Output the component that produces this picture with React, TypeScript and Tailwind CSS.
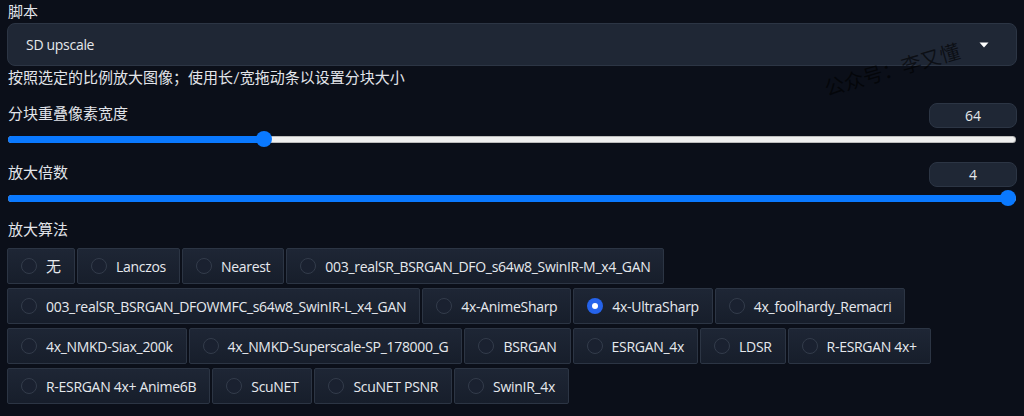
import React from "react";

const options = [
  "无",
  "Lanczos",
  "Nearest",
  "003_realSR_BSRGAN_DFO_s64w8_SwinIR-M_x4_GAN",
  "003_realSR_BSRGAN_DFOWMFC_s64w8_SwinIR-L_x4_GAN",
  "4x-AnimeSharp",
  "4x-UltraSharp",
  "4x_foolhardy_Remacri",
  "4x_NMKD-Siax_200k",
  "4x_NMKD-Superscale-SP_178000_G",
  "BSRGAN",
  "ESRGAN_4x",
  "LDSR",
  "R-ESRGAN 4x+",
  "R-ESRGAN 4x+ Anime6B",
  "ScuNET",
  "ScuNET PSNR",
  "SwinIR_4x",
];

const FONT = "font-['Lato','Noto_Sans_CJK_SC',sans-serif]";
const LATIN = "font-['Open_Sans',sans-serif] [font-stretch:92%] font-medium";

function Slider({ value, min, max, label }: { value: number; min: number; max: number; label: string }) {
  const frac = (value - min) / (max - min);
  return (
    <div className="flex flex-col">
      <div className="flex items-start justify-between">
        <span className="text-[15px] leading-[22px] text-[#e2e5ea] pl-[1px]">{label}</span>
        <div className={`mt-[1px] h-[25px] w-[88px] rounded-lg border border-[#2c3544] bg-[#1f2735] flex items-center justify-center text-[14px] text-[#e5e7eb] ${LATIN}`}>
          {value}
        </div>
      </div>
      <div className="relative mt-[3px] h-4 mx-[1px]">
        <div className="absolute left-0 right-0 top-[4.5px] h-[7px] rounded-full bg-[#efefef] border border-[#9a9a9a]/60" />
        <div
          className="absolute left-0 top-[4.5px] h-[7px] rounded-full bg-[#0a79ff]"
          style={{ width: `calc(${frac} * (100% - 16px) + 8px)` }}
        />
        <div
          className="absolute top-0 h-4 w-4 rounded-full bg-[#0a79ff]"
          style={{ left: `calc(${frac} * (100% - 16px))` }}
        />
      </div>
    </div>
  );
}

export default function App() {
  return (
    <div className={`relative w-[1024px] h-[416px] overflow-hidden bg-[#0b0f19] px-[7px] ${FONT}`}>
      <div className="text-[15px] leading-[22px] text-[#e2e5ea] pl-[1px]">脚本</div>
      <div className="mt-[1px] h-[43px] rounded-lg border border-[#2c3544] bg-[#1f2735] flex items-center justify-between pl-[18px] pr-[27px]">
        <span className={`text-[14px] tracking-[-0.3px] text-[#e5e7eb] ${LATIN}`}>SD upscale</span>
        <svg width="10" height="6" viewBox="0 0 10 6">
          <path d="M0.5 0.5 L9.5 0.5 L5 5.5 Z" fill="#ffffff" />
        </svg>
      </div>
      <div className="text-[15px] leading-[22px] text-[#e2e5ea] pl-[1px]">
        按照选定的比例放大图像；使用长/宽拖动条以设置分块大小
      </div>

      <div className="mt-[14px]">
        <Slider label="分块重叠像素宽度" value={64} min={0} max={256} />
      </div>
      <div className="mt-[14px]">
        <Slider label="放大倍数" value={4} min={1} max={4} />
      </div>

      <div className="mt-[12px] text-[15px] leading-[22px] text-[#e2e5ea] pl-[1px]">放大算法</div>

      <div className="mt-[8px] flex flex-wrap gap-x-[2px] gap-y-[4px]">
        {options.map((o) => {
          const sel = o === "4x-UltraSharp";
          const cjk = o === "无";
          return (
            <label
              key={o}
              className="h-[36px] flex items-center gap-[9px] pl-[13px] pr-[13px] border border-[#2c3544] bg-gradient-to-b from-[#1e2635] to-[#171e2b] rounded-[2px]"
            >
              {sel ? (
                <span className="h-4 w-4 rounded-full bg-[#2563eb] flex items-center justify-center">
                  <span className="h-[6px] w-[6px] rounded-full bg-white" />
                </span>
              ) : (
                <span className="h-4 w-4 rounded-full border border-[#333c4b] bg-[#1a2130]" />
              )}
              <span
                className={
                  cjk
                    ? "text-[15px] text-[#e6e9ee] whitespace-nowrap"
                    : `text-[14px] tracking-[-0.3px] text-[#e6e9ee] whitespace-nowrap ${LATIN}`
                }
              >
                {o}
              </span>
            </label>
          );
        })}
      </div>

      <div className="absolute left-[822px] top-[54px] -rotate-[16deg] text-[20px] text-black/60 whitespace-nowrap pointer-events-none font-['Noto_Sans_CJK_SC',sans-serif]">
        公众号：李又懂
      </div>
    </div>
  );
}
